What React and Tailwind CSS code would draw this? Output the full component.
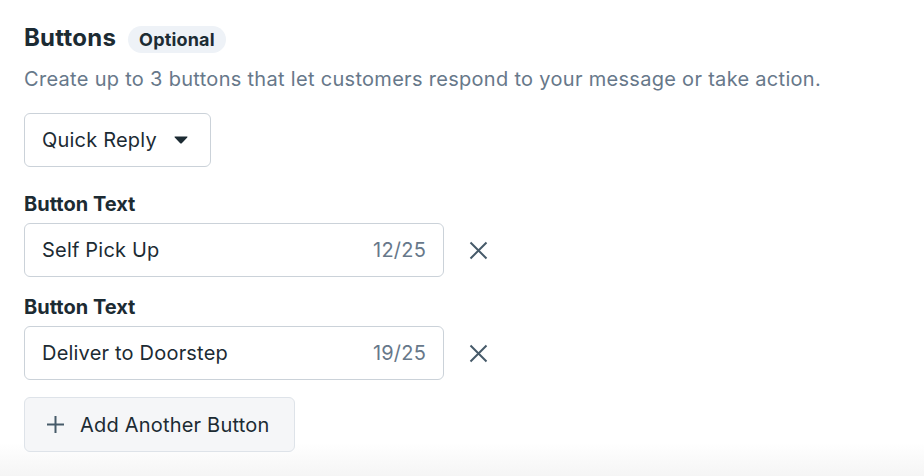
import { useState } from "react";

function ButtonField({ value, max = 25 }) {
  return (
    <div className="flex flex-col">
      <label className="text-[20px] font-bold leading-[24px] text-[#1c2b33]">Button Text</label>
      <div className="mt-[7px] flex items-center">
        <div className="flex h-[54px] w-[420px] items-center justify-between rounded-md border border-[#cbd2d9] bg-white px-[17px]">
          <span className="text-[20px] tracking-[0.01em] text-[#1c2b33]">{value}</span>
          <span className="text-[20px] tracking-[0.01em] text-[#67788a]">
            {value.length}/{max}
          </span>
        </div>
        <button className="ml-[24px] flex h-[20px] w-[20px] items-center justify-center text-[#465a69]">
          <svg width="19" height="19" viewBox="0 0 19 19" fill="none" stroke="currentColor" strokeWidth="2">
            <path d="M1.5 1.5 L17.5 17.5 M17.5 1.5 L1.5 17.5" />
          </svg>
        </button>
      </div>
    </div>
  );
}

export default function App() {
  const [buttons] = useState(["Self Pick Up", "Deliver to Doorstep"]);

  return (
    <div
      className="h-[476px] w-[924px] overflow-hidden bg-gradient-to-b from-white from-[93%] to-[#f5f5f5] px-6 pt-[22px]"
      style={{ fontFamily: "Inter, 'Noto Sans', sans-serif" }}
    >
      <div className="flex items-center gap-[12px]">
        <h2 className="text-[24px] font-bold leading-[32px] tracking-[0.01em] text-[#1c2b33]">Buttons</h2>
        <span className="mt-[3px] rounded-full bg-[#eef2f7] px-[11px] py-[3px] text-[18px] font-bold leading-[21px] tracking-[0.01em] text-[#1c2b33]">
          Optional
        </span>
      </div>
      <p className="mt-[11px] text-[20px] leading-[28px] tracking-[0.015em] text-[#67788a]">
        Create up to 3 buttons that let customers respond to your message or take action.
      </p>

      <button className="mt-[20px] flex h-[54px] w-[187px] items-center rounded-md border border-[#cbd2d9] bg-white pl-[17px] text-[20px] tracking-[0.01em] text-[#1c2b33]">
        Quick Reply
        <svg className="ml-[17px]" width="14" height="8" viewBox="0 0 14 8">
          <path d="M1 0.5 H13 Q14 0.5 13.2 1.4 L7.8 7.2 Q7 8 6.2 7.2 L0.8 1.4 Q0 0.5 1 0.5 Z" fill="#1c2b33" />
        </svg>
      </button>

      <div className="mt-[25px] flex flex-col gap-[18px]">
        {buttons.map((b, i) => (
          <ButtonField key={i} value={b} />
        ))}
      </div>

      <button className="mt-[17px] flex h-[55px] items-center rounded-md border border-[#dee3e9] bg-[#f5f6f8] pl-[22px] pr-[25px] text-[20px] tracking-[0.01em] text-[#1c2b33]">
        <svg width="17" height="17" viewBox="0 0 17 17" stroke="#465a69" strokeWidth="2">
          <path d="M8.5 0 V17 M0 8.5 H17" />
        </svg>
        <span className="ml-[16px]">Add Another Button</span>
      </button>
    </div>
  );
}
